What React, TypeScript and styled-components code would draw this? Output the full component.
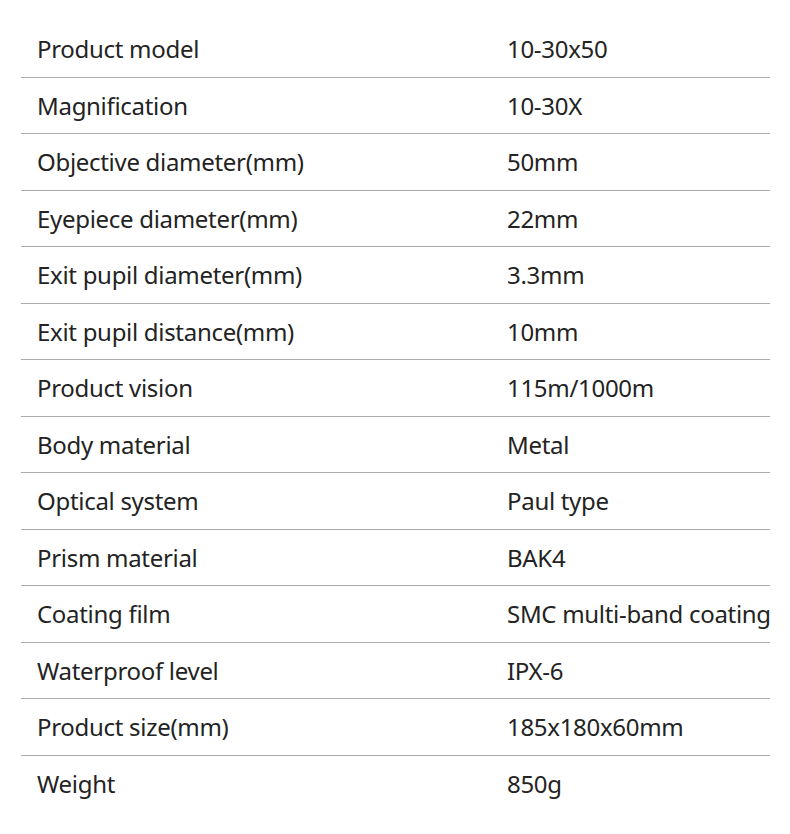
import React from 'react';
import styled, { createGlobalStyle } from 'styled-components';

const GlobalStyle = createGlobalStyle`
  html, body {
    margin: 0;
    padding: 0;
    background: #fff;
  }
`;

const Table = styled.div`
  width: 790px;
  height: 834px;
  padding: 21px 20px 0 21px;
  box-sizing: border-box;
  background: #fff;
  font-family: 'Noto Sans', 'Open Sans', sans-serif;
  color: #232323;
`;

const Row = styled.div<{ $last?: boolean }>`
  display: grid;
  grid-template-columns: 486px 1fr;
  align-items: center;
  height: 56.5px;
  box-sizing: border-box;
  border-bottom: ${({ $last }) => ($last ? 'none' : '1px solid #ababab')};
`;

const Cell = styled.div`
  padding-left: 16px;
  font-size: 24px;
  letter-spacing: -0.3px;
  white-space: nowrap;
`;

const Value = styled(Cell)`
  padding-left: 0;
`;

const specs: [string, string][] = [
  ['Product model', '10-30x50'],
  ['Magnification', '10-30X'],
  ['Objective diameter(mm)', '50mm'],
  ['Eyepiece diameter(mm)', '22mm'],
  ['Exit pupil diameter(mm)', '3.3mm'],
  ['Exit pupil distance(mm)', '10mm'],
  ['Product vision', '115m/1000m'],
  ['Body material', 'Metal'],
  ['Optical system', 'Paul type'],
  ['Prism material', 'BAK4'],
  ['Coating film', 'SMC multi-band coating'],
  ['Waterproof level', 'IPX-6'],
  ['Product size(mm)', '185x180x60mm'],
  ['Weight', '850g'],
];

export default function App() {
  return (
    <>
      <GlobalStyle />
      <Table>
        {specs.map(([k, v], i) => (
          <Row key={k} $last={i === specs.length - 1}>
            <Cell>{k}</Cell>
            <Value>{v}</Value>
          </Row>
        ))}
      </Table>
    </>
  );
}
